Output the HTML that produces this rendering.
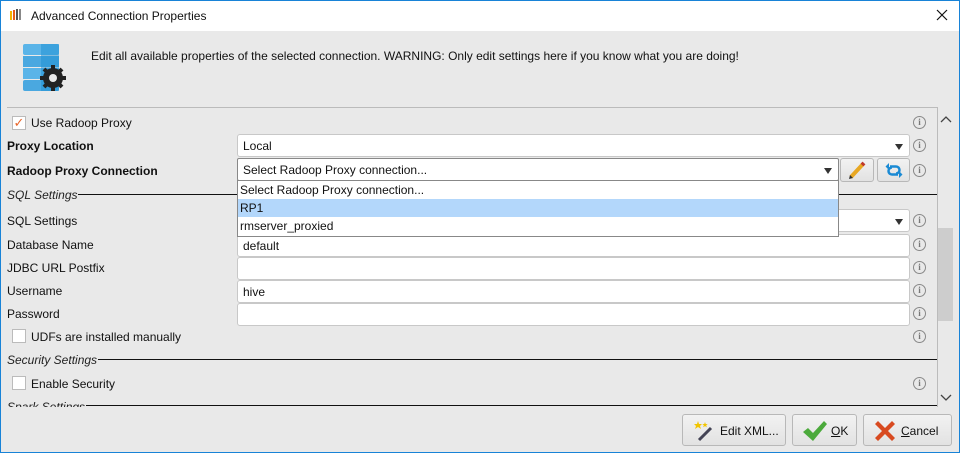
<!DOCTYPE html>
<html><head><style>
*{box-sizing:border-box;margin:0;padding:0}
body{width:960px;height:453px;position:relative;background:#e9e9e9;font:12px "Liberation Sans",sans-serif;color:#111;overflow:hidden}
.a{position:absolute}
.win{left:0;top:0;width:960px;height:453px;border:1px solid #1883d7}
.tb{left:1px;top:1px;width:958px;height:30px;background:#fff}
.f{position:absolute;background:#fff;border:1px solid #c8c8c8;border-radius:3px;height:23px;padding:4px 5px}
.tri{position:absolute;right:6px;top:9px;width:0;height:0;border-left:4px solid transparent;border-right:4px solid transparent;border-top:6px solid #333}
.i{position:absolute;left:913px;width:13px;height:13px;border:1px solid #888;border-radius:50%;font:bold 9px "Liberation Serif",serif;color:#777;text-align:center;line-height:11px}
.cb{position:absolute;left:12px;width:14px;height:14px;background:#fff;border:1px solid #bbb}
.lbl{position:absolute;left:7px}
.sec{position:absolute;font-style:italic;left:7px;color:#222}
.ln{position:absolute;height:1px;background:#111}
.btn{position:absolute;border:1px solid #b8b8b8;border-radius:3px;background:linear-gradient(#f2f2f2,#e2e2e2)}
.dd div{height:18px;padding:2px 2px}
</style></head><body>
<div class="a win"></div>
<div class="a tb"></div>
<svg class="a" style="left:9px;top:8px" width="14" height="14"><rect x="1" y="3" width="2" height="9" fill="#f4b400"/><rect x="4" y="2" width="2" height="10" fill="#e85d1a"/><rect x="7" y="1" width="2" height="11" fill="#555"/><rect x="10" y="1" width="2" height="11" fill="#888"/></svg>
<div class="a" style="left:31px;top:9px">Advanced Connection Properties</div>
<svg class="a" style="left:936px;top:9px" width="12" height="12"><path d="M1 1L11 11M11 1L1 11" stroke="#111" stroke-width="1.2"/></svg>
<svg class="a" style="left:22px;top:43px" width="45" height="50"><rect x="1" y="1" width="36" height="11" rx="2" fill="#5ab4e8"/><rect x="1" y="13" width="36" height="11" fill="#4aa8e0"/><rect x="1" y="25" width="36" height="11" fill="#5ab4e8"/><rect x="1" y="37" width="36" height="11" rx="2" fill="#4aa8e0"/><rect x="19" y="1" width="18" height="47" fill="#1e8fd2" opacity=".5"/><circle cx="31" cy="35" r="10" fill="#222"/><g stroke="#222" stroke-width="4"><line x1="31" y1="22" x2="31" y2="48"/><line x1="18" y1="35" x2="44" y2="35"/><line x1="22" y1="26" x2="40" y2="44"/><line x1="40" y1="26" x2="22" y2="44"/></g><circle cx="31" cy="35" r="4" fill="#e9e9e9"/></svg>
<div class="a" style="left:91px;top:49px">Edit all available properties of the selected connection. WARNING: Only edit settings here if you know what you are doing!</div>
<div class="a" style="left:7px;top:107px;width:930px;height:1px;background:#bbb"></div>
<div class="a" style="left:937px;top:107px;width:1px;height:300px;background:#bbb"></div>
<div class="a" style="left:938px;top:228px;width:15px;height:93px;background:#cdcdcd"></div>
<svg class="a" style="left:940px;top:115px" width="12" height="8"><path d="M1 7L6 2L11 7" stroke="#444" fill="none" stroke-width="1.3"/></svg>
<svg class="a" style="left:940px;top:394px" width="12" height="8"><path d="M1 1L6 6L11 1" stroke="#444" fill="none" stroke-width="1.3"/></svg>

<div class="cb" style="top:116px;color:#e8662a;font-size:13px;line-height:11px;text-align:center">✓</div>
<div class="a" style="left:31px;top:116px">Use Radoop Proxy</div>
<div class="i" style="top:116px">i</div>
<div class="lbl" style="top:139px;font-weight:bold">Proxy Location</div>
<div class="f" style="left:237px;top:134px;width:673px">Local<div class="tri"></div></div>
<div class="i" style="top:139px">i</div>
<div class="lbl" style="top:164px;font-weight:bold">Radoop Proxy Connection</div>
<div class="f" style="left:237px;top:158px;width:602px;border-color:#888;border-radius:2px">Select Radoop Proxy connection...<div class="tri"></div></div>
<div class="btn" style="left:840px;top:158px;width:34px;height:24px"><svg width="32" height="22"><line x1="10" y1="18" x2="22" y2="5" stroke="#e8a823" stroke-width="4"/><line x1="21" y1="6" x2="23" y2="4" stroke="#c0392b" stroke-width="4"/><path d="M8 20 l1-4 3 3z" fill="#333"/></svg></div>
<div class="btn" style="left:877px;top:158px;width:33px;height:24px"><svg class="a" style="left:7px;top:4px" width="18" height="15"><path d="M5 3.5h6a3.5 3.5 0 0 1 0 7" stroke="#1a8ad4" stroke-width="2.5" fill="none"/><path d="M13 11.5h-6a3.5 3.5 0 0 1 0-7" stroke="#1a8ad4" stroke-width="2.5" fill="none"/><path d="M4 0v7l-3.5-3.5z M14 8v7l3.5-3.5z" fill="#1a8ad4"/></svg></div>
<div class="i" style="top:164px">i</div>

<div class="sec" style="top:188px">SQL Settings</div>
<div class="ln" style="left:78px;top:194px;width:859px"></div>
<div class="lbl" style="top:214px">SQL Settings</div>
<div class="f" style="left:237px;top:209px;width:673px"><div class="tri"></div></div>
<div class="i" style="top:214px">i</div>
<div class="lbl" style="top:238px">Database Name</div>
<div class="f" style="left:237px;top:234px;width:673px">default</div>
<div class="i" style="top:238px">i</div>
<div class="lbl" style="top:261px">JDBC URL Postfix</div>
<div class="f" style="left:237px;top:257px;width:673px"></div>
<div class="i" style="top:261px">i</div>
<div class="lbl" style="top:284px">Username</div>
<div class="f" style="left:237px;top:280px;width:673px">hive</div>
<div class="i" style="top:284px">i</div>
<div class="lbl" style="top:307px">Password</div>
<div class="f" style="left:237px;top:303px;width:673px"></div>
<div class="i" style="top:307px">i</div>
<div class="cb" style="top:329px"></div>
<div class="a" style="left:31px;top:330px">UDFs are installed manually</div>
<div class="i" style="top:330px">i</div>
<div class="sec" style="top:353px">Security Settings</div>
<div class="ln" style="left:98px;top:359px;width:839px"></div>
<div class="cb" style="top:376px"></div>
<div class="a" style="left:31px;top:377px">Enable Security</div>
<div class="i" style="top:377px">i</div>
<div class="a" style="left:0;top:398px;width:937px;height:9px;overflow:hidden"><div class="sec" style="top:2px">Spark Settings</div></div>
<div class="ln" style="left:86px;top:405px;width:851px"></div>

<div class="a dd" style="left:237px;top:180px;width:602px;height:57px;background:#fff;border:1px solid #888">
<div>Select Radoop Proxy connection...</div><div style="background:#b3d7fb">RP1</div><div>rmserver_proxied</div></div>

<div class="btn" style="left:682px;top:414px;width:104px;height:32px"><svg class="a" style="left:10px;top:4px" width="22" height="24"><path d="M5 2l1 3h3l-2 2 1 3-3-2-3 2 1-3-2-2h3z" fill="#f2c500"/><path d="M12 3l.7 2h2l-1.5 1.3.6 2-1.8-1.2-1.8 1.2.6-2-1.5-1.3h2z" fill="#f2c500"/><line x1="6" y1="21" x2="18" y2="9" stroke="#445" stroke-width="3"/></svg><span class="a" style="left:37px;top:9px">Edit XML...</span></div>
<div class="btn" style="left:792px;top:414px;width:65px;height:32px"><svg class="a" style="left:8px;top:4px" width="26" height="24"><path d="M2 13l5-4 5 5L23 2l3 3-14 17z" fill="#4caa3c"/></svg><span class="a" style="left:38px;top:9px"><u>O</u>K</span></div>
<div class="btn" style="left:863px;top:414px;width:89px;height:32px"><svg class="a" style="left:9px;top:4px" width="24" height="24"><path d="M2 5l3-3 7 7 7-7 3 3-7 7 7 7-3 3-7-7-7 7-3-3 7-7z" fill="#d84a20"/></svg><span class="a" style="left:37px;top:9px"><u>C</u>ancel</span></div>
</body></html>
